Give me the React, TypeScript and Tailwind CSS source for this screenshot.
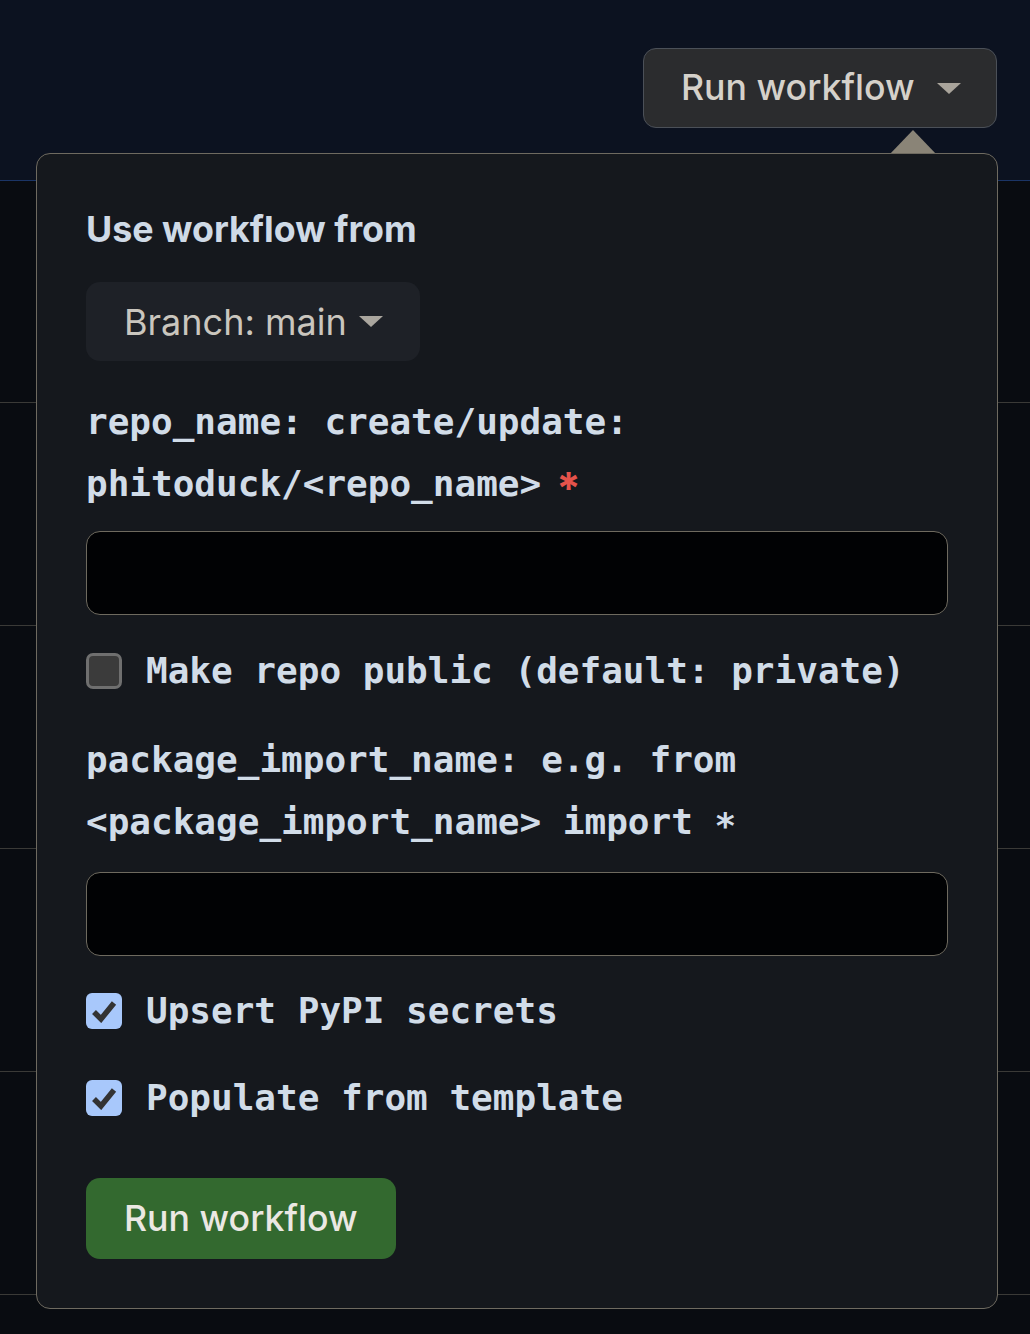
import React from "react";

const mono = { fontFamily: '"DejaVu Sans Mono", "Liberation Mono", monospace' };
const sans = { fontFamily: 'Inter, "Noto Sans", "Liberation Sans", sans-serif' };

function Caret({ className }: { className?: string }) {
  return (
    <svg className={className} width="24" height="11" viewBox="0 0 24 11">
      <path d="M0 0 L24 0 L12 11 Z" fill="currentColor" />
    </svg>
  );
}

function Check({ checked }: { checked: boolean }) {
  if (!checked) {
    return (
      <div className="w-[36px] h-[36px] shrink-0 rounded-[7px] border-[3px] border-[#6f6f6f] bg-[#3b3b3b]" />
    );
  }
  return (
    <div className="w-[36px] h-[36px] shrink-0 rounded-[6px] bg-[#a8c8fb] flex items-center justify-center">
      <svg width="26" height="24" viewBox="0 0 26 24">
        <path d="M3 13 L10 20 L23 4" stroke="#333" strokeWidth="5.5" fill="none" strokeLinejoin="miter" strokeLinecap="butt" />
      </svg>
    </div>
  );
}

export default function App() {
  return (
    <div className="relative w-[1030px] h-[1334px] overflow-hidden bg-[#090c11]" style={sans}>
      <div className="h-[181px] bg-[#0c1220] border-b border-[#1b3566] flex justify-end pt-[48px] pr-[33px]">
        <div className="h-[80px] w-[354px] rounded-[13px] border-[1.5px] border-[#4b5058] bg-[#2b2c2e] flex items-center pl-[37px] text-[#d5d1ca] text-[35.7px] font-medium">
          <span>Run workflow</span>
          <Caret className="ml-[22px] text-[#a9a49b]" />
        </div>
      </div>
      <div className="flex flex-col">
        <div className="h-[222px] border-b-[1.5px] border-[#3a3a37]" />
        <div className="h-[223px] border-b-[1.5px] border-[#3a3a37]" />
        <div className="h-[223px] border-b-[1.5px] border-[#3a3a37]" />
        <div className="h-[223px] border-b-[1.5px] border-[#3a3a37]" />
        <div className="h-[223px] border-b-[1.5px] border-[#3a3a37]" />
      </div>

      <svg className="absolute left-[889px] top-[130px]" width="48" height="25" viewBox="0 0 48 25">
        <path d="M0 25 L24 0 L48 25 Z" fill="#8a8477" />
      </svg>

      <div className="absolute left-[36px] top-[153px] w-[962px] h-[1156px] rounded-[14px] border-[1.5px] border-[#6e6a60] bg-[#15181d] pl-[49px] pt-[46px]">
        <div className="h-[60px] flex items-center text-[35.8px] font-bold text-[#cfdae6]">Use workflow from</div>

        <div className="mt-[22px] h-[79px] w-[334px] rounded-[14px] bg-[#1e2127] flex items-center pl-[38px] text-[36px] text-[#cac6be]">
          <span>Branch: main</span>
          <Caret className="ml-[12px] text-[#aaa69e]" />
        </div>

        <div className="mt-[30px] text-[36px] leading-[62px] font-bold text-[#d1dce8]" style={mono}>
          <div className="h-[62px]">repo_name: create/update:</div>
          <div className="h-[62px]">
            phitoduck/&lt;repo_name&gt;
            <span className="ml-[15px] text-[#e5534b] text-[44px] leading-none translate-y-[8px] inline-block" style={sans}>*</span>
          </div>
        </div>

        <div className="mt-[16px] h-[84px] w-[862px] rounded-[14px] border-[1.5px] border-[#6e6a5f] bg-[#010204]" />

        <div className="mt-[25px] h-[62px] flex items-center gap-[24px]">
          <Check checked={false} />
          <span className="text-[36px] font-bold text-[#d1dce8]" style={mono}>Make repo public (default: private)</span>
        </div>

        <div className="mt-[27px] text-[36px] leading-[62px] font-bold text-[#d1dce8]" style={mono}>
          <div className="h-[62px]">package_import_name: e.g. from</div>
          <div className="h-[62px]">
            &lt;package_import_name&gt; import <span className="inline-block leading-none translate-y-[4px]">*</span>
          </div>
        </div>

        <div className="mt-[19px] h-[84px] w-[862px] rounded-[14px] border-[1.5px] border-[#6e6a5f] bg-[#010204]" />

        <div className="mt-[24px] h-[62px] flex items-center gap-[24px]">
          <Check checked={true} />
          <span className="text-[36px] font-bold text-[#d1dce8]" style={mono}>Upsert PyPI secrets</span>
        </div>

        <div className="mt-[25px] h-[62px] flex items-center gap-[24px]">
          <Check checked={true} />
          <span className="text-[36px] font-bold text-[#d1dce8]" style={mono}>Populate from template</span>
        </div>

        <div className="mt-[49px] h-[81px] w-[310px] rounded-[14px] bg-[#33692f] flex items-center pl-[38px] text-[35.7px] font-medium text-[#ebe8e3]">
          Run workflow
        </div>
      </div>
    </div>
  );
}
